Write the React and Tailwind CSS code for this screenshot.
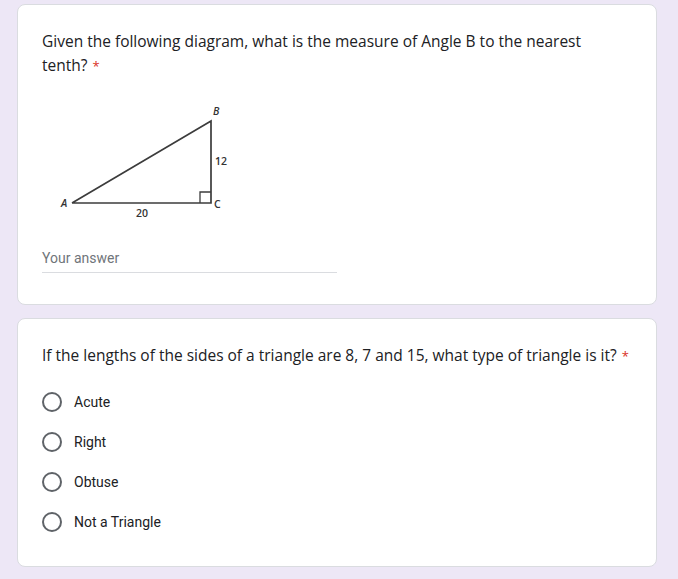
import React from 'react';

const QUESTION_FONT = { fontFamily: '"Open Sans", "Noto Sans", sans-serif' };

const Required = () => <span className="text-[#d93025] text-[13px] ml-[5px]">*</span>;

const Diagram = () => (
    <svg width="190" height="122" viewBox="0 0 190 122" className="block ml-[13px]">
        <g stroke="#3c3c3c" strokeWidth="1.7" fill="none">
            <polyline points="17,102 156,20 156,102 17,102" />
            <polyline points="145,102 145,91 156,91" strokeWidth="1.3" />
        </g>
        <g fill="#333" fontFamily="'Open Sans', sans-serif" fontWeight="600" fontSize="10.5">
            <text x="158" y="14" fontStyle="italic">B</text>
            <text x="160" y="64">12</text>
            <text x="159" y="107">C</text>
            <text x="6" y="106" fontStyle="italic">A</text>
            <text x="81" y="116">20</text>
        </g>
    </svg>
);

const Radio = ({ label }) => (
    <div className="flex items-center h-10">
        <span className="w-5 h-5 rounded-full border-2 border-[#5f6368] shrink-0" />
        <span className="ml-3 text-sm text-[#202124]">{label}</span>
    </div>
);

export default function App() {
    return (
        <div className="min-h-[579px] bg-[#ede7f6] pt-1 pl-[17px]" style={{ fontFamily: 'Roboto, Arial, sans-serif' }}>
            <div className="w-[640px] flex flex-col gap-[13px]">
                <div className="bg-white border border-[#dadce0] rounded-lg p-6">
                    <div className="text-[15.5px] leading-6 text-[#202124] w-[560px]" style={QUESTION_FONT}>
                        Given the following diagram, what is the measure of Angle B to the nearest tenth?<Required />
                    </div>
                    <div className="mt-[23px]">
                        <Diagram />
                    </div>
                    <div className="mt-[25px] w-[295px]">
                        <div className="text-sm text-[#70757a] pb-[4px] border-b border-[#dadce0]">Your answer</div>
                        <div className="h-[7px]" />
                    </div>
                </div>
                <div className="bg-white border border-[#dadce0] rounded-lg p-6">
                    <div className="text-[15.5px] leading-6 text-[#202124]" style={QUESTION_FONT}>
                        If the lengths of the sides of a triangle are 8, 7 and 15, what type of triangle is it?<Required />
                    </div>
                    <div className="mt-[14px] flex flex-col">
                        <Radio label="Acute" />
                        <Radio label="Right" />
                        <Radio label="Obtuse" />
                        <Radio label="Not a Triangle" />
                    </div>
                </div>
            </div>
        </div>
    );
}
